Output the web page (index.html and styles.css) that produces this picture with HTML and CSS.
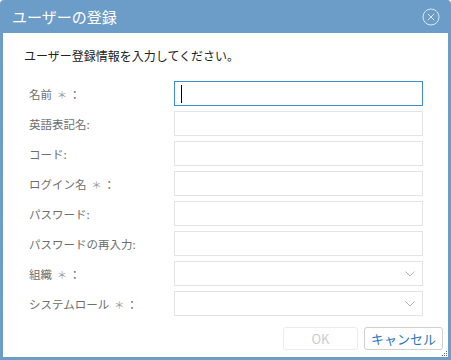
FILE: index.html
```html
<!DOCTYPE html>
<html lang="ja">
<head>
    <meta charset="UTF-8">
    <meta name="viewport" content="width=device-width, initial-scale=1.0">
    <title>ユーザーの登録</title>
    <link rel="stylesheet" href="styles.css">
</head>
<body>
    <div class="dialog">
        <div class="header">
            <span class="title">ユーザーの登録</span>
            <svg class="close" width="18" height="18" viewBox="0 0 18 18">
                <circle cx="9" cy="9" r="8" fill="none" stroke="#dbe7f2" stroke-width="1"/>
                <path d="M5.8 5.8 L12.2 12.2 M12.2 5.8 L5.8 12.2" stroke="#dbe7f2" stroke-width="1" fill="none"/>
            </svg>
        </div>
        <div class="content">
            <p class="intro">ユーザー登録情報を入力してください。</p>
            <div class="form">
                <div class="row">
                    <label>名前<span class="req">＊</span>：</label>
                    <div class="field focused"><span class="caret"></span></div>
                </div>
                <div class="row">
                    <label>英語表記名:</label>
                    <div class="field"></div>
                </div>
                <div class="row">
                    <label>コード:</label>
                    <div class="field"></div>
                </div>
                <div class="row">
                    <label>ログイン名<span class="req">＊</span>：</label>
                    <div class="field"></div>
                </div>
                <div class="row">
                    <label>パスワード:</label>
                    <div class="field"></div>
                </div>
                <div class="row">
                    <label>パスワードの再入力:</label>
                    <div class="field"></div>
                </div>
                <div class="row">
                    <label>組織<span class="req">＊</span>：</label>
                    <div class="field select">
                        <svg width="10" height="6" viewBox="0 0 10 6"><path d="M0.5 0.5 L5 5 L9.5 0.5" fill="none" stroke="#b3b3b3" stroke-width="1"/></svg>
                    </div>
                </div>
                <div class="row">
                    <label>システムロール<span class="req">＊</span>：</label>
                    <div class="field select">
                        <svg width="10" height="6" viewBox="0 0 10 6"><path d="M0.5 0.5 L5 5 L9.5 0.5" fill="none" stroke="#b3b3b3" stroke-width="1"/></svg>
                    </div>
                </div>
            </div>
            <div class="footer">
                <button class="btn ok" disabled>OK</button>
                <button class="btn cancel">キャンセル</button>
            </div>
            <svg class="grip" width="6" height="6" viewBox="0 0 6 6">
                <rect x="4" y="0" width="1" height="1" fill="#666"/>
                <rect x="2" y="2" width="1" height="1" fill="#666"/>
                <rect x="4" y="2" width="1" height="1" fill="#666"/>
                <rect x="0" y="4" width="1" height="1" fill="#666"/>
                <rect x="2" y="4" width="1" height="1" fill="#666"/>
                <rect x="4" y="4" width="1" height="1" fill="#666"/>
            </svg>
        </div>
    </div>
</body>
</html>
```

FILE: styles.css
```css
body {
    margin: 0;
    background-color: #ffffff;
    font-family: "Noto Sans CJK JP", "Liberation Sans", sans-serif;
}
.dialog {
    width: 451px;
    height: 360px;
    box-sizing: border-box;
    padding: 0 3px 3px 3px;
    background-color: #6c9dc8;
    border-radius: 4px 4px 0 0;
    display: flex;
    flex-direction: column;
}
.header {
    height: 33px;
    display: flex;
    align-items: center;
    justify-content: space-between;
    padding: 0 8px 0 9px;
}
.title {
    color: #ffffff;
    font-size: 15px;
    line-height: 18px;
}
.close {
    margin-top: 1px;
}
.content {
    flex: 1;
    background-color: #ffffff;
    display: flex;
    flex-direction: column;
    padding: 14px 5px 7px 21px;
    position: relative;
}
.intro {
    margin: 0;
    font-size: 12px;
    line-height: 18px;
    color: #222222;
}
.form {
    margin-top: 16px;
    display: flex;
    flex-direction: column;
    gap: 5px;
}
.row {
    display: flex;
    align-items: center;
    height: 25px;
    padding-left: 5px;
}
.row label {
    width: 145px;
    font-size: 11.5px;
    color: #6e6e6e;
}
.req {
    font-size: 10px;
    color: #999999;
    margin: 0 2px 0 5px;
}
.field {
    width: 249px;
    height: 25px;
    box-sizing: border-box;
    border: 1px solid #e3e3e3;
    display: flex;
    align-items: center;
}
.field.focused {
    border-color: #3b8fd2;
    padding-left: 6px;
}
.caret {
    width: 1px;
    height: 18px;
    background-color: #000000;
}
.field.select {
    justify-content: flex-end;
    padding-right: 7px;
}
.footer {
    margin-top: auto;
    display: flex;
    justify-content: flex-end;
    gap: 6px;
}
.btn {
    height: 23px;
    padding: 0;
    background-color: #ffffff;
    border-radius: 3px;
    font-family: "Noto Sans CJK JP", "Liberation Sans", sans-serif;
    font-size: 13px;
    line-height: 21px;
}
.ok {
    width: 75px;
    border: 1px solid #ececec;
    color: #cccccc;
}
.cancel {
    width: 79px;
    border: 1px solid #cfcfcf;
    color: #2a78c0;
    cursor: pointer;
}
.grip {
    position: absolute;
    right: 0;
    bottom: 0;
}
```
